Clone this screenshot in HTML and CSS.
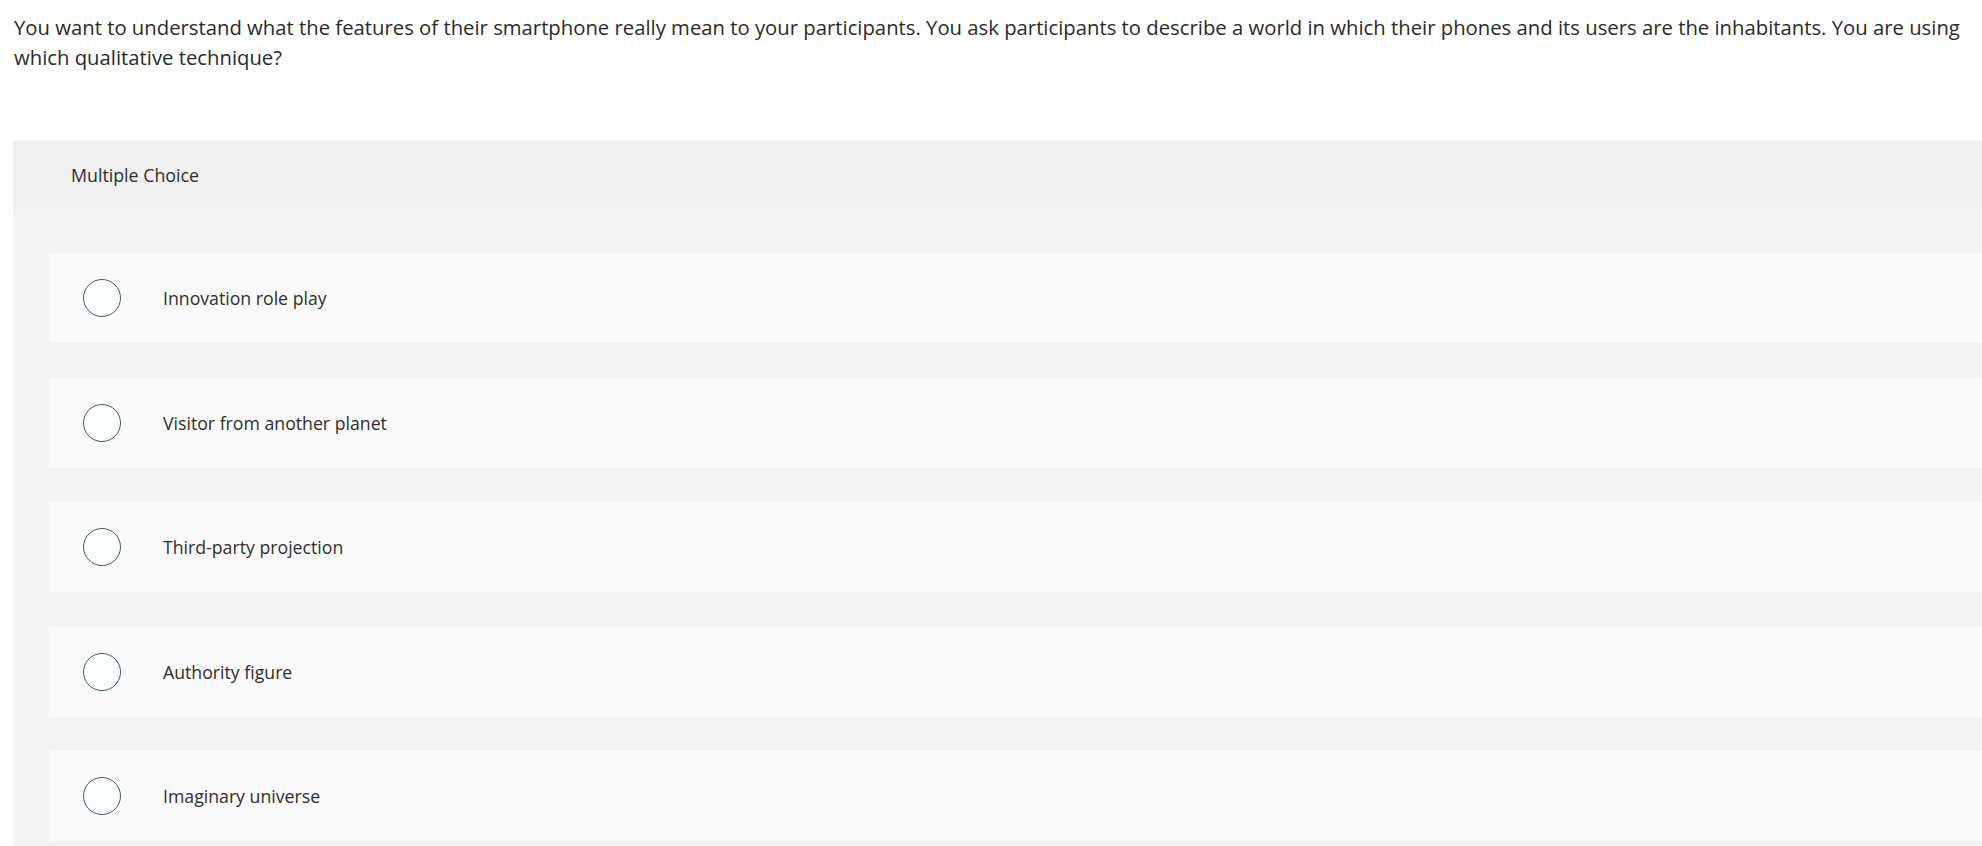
FILE: index.html
```html
<!DOCTYPE html>
<html lang="en">
<head>
<meta charset="utf-8">
<title>Multiple Choice</title>
<link rel="stylesheet" href="styles.css">
</head>
<body>
<div class="question">You want to understand what the features of their smartphone really mean to your participants. You ask participants to describe a world in which their phones and its users are the inhabitants. You are using which qualitative technique?</div>
<div class="panel">
  <div class="panel-head">Multiple Choice</div>
  <div class="panel-body">
    <div class="choice"><span class="radio"></span><span class="label">Innovation role play</span></div>
    <div class="choice"><span class="radio"></span><span class="label">Visitor from another planet</span></div>
    <div class="choice"><span class="radio"></span><span class="label">Third-party projection</span></div>
    <div class="choice"><span class="radio"></span><span class="label">Authority figure</span></div>
    <div class="choice"><span class="radio"></span><span class="label">Imaginary universe</span></div>
  </div>
</div>
</body>
</html>
```
FILE: styles.css
```css
html, body {
  margin: 0;
  padding: 0;
  background: #ffffff;
  overflow: hidden;
}
body {
  font-family: "Open Sans", "Lato", sans-serif;
  color: #333333;
}
.question {
  padding: 12px 8px 0 14px;
  font-size: 20.3px;
  line-height: 30px;
  color: #2a2a2a;
}
.panel {
  margin: 69px 0 0 13px;
}
.panel-head {
  height: 68px;
  background: #f0f0f0;
  display: flex;
  align-items: center;
  padding-left: 58px;
  font-size: 17.8px;
  color: #2e2e2e;
}
.panel-body {
  background: #f4f4f4;
  padding: 44px 0 20px 36px;
  display: flex;
  flex-direction: column;
  gap: 34.5px;
}
.choice {
  height: 90px;
  background: #fafafa;
  display: flex;
  align-items: center;
}
.radio {
  width: 36px;
  height: 36px;
  border: 1.5px solid #44576a;
  border-radius: 50%;
  margin-left: 34px;
  flex: none;
  background: #fbfdff;
}
.label {
  margin-left: 42px;
  font-size: 17.7px;
  color: #2e2e2e;
}
```
